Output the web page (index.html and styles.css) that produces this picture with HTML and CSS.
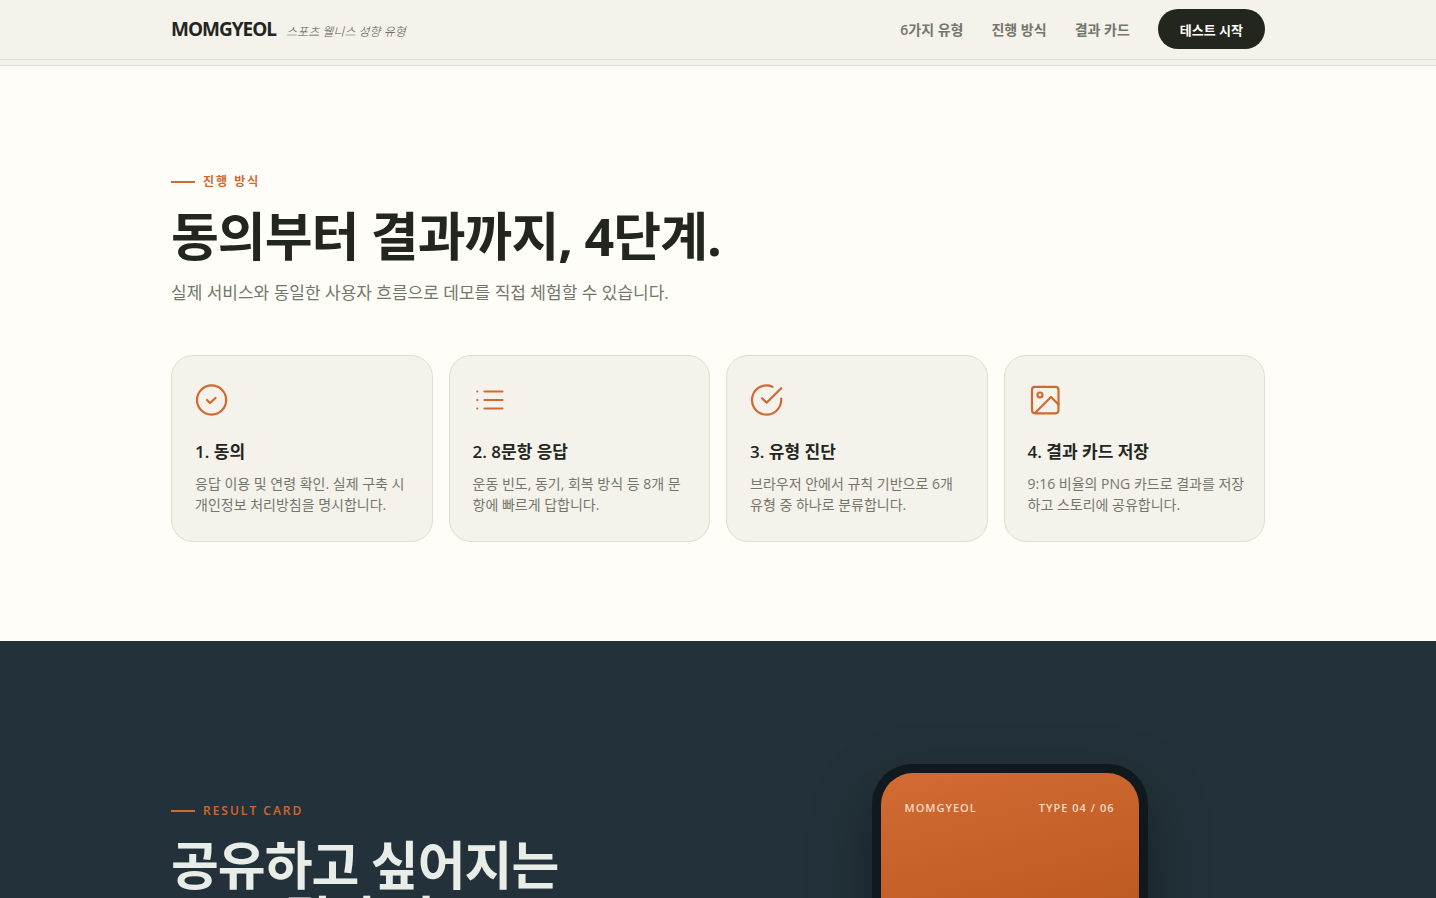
FILE: index.html
```
<!DOCTYPE html>
<html lang="ko">
<head>
    <meta charset="utf-8">
    <title>MOMGYEOL</title>
    <meta name="viewport" content="width=device-width, initial-scale=1.0">
    <link rel="stylesheet" href="styles.css">
</head>
<body>
    <header class="site-header">
        <div class="container header-inner">
            <a href="#" class="brand">MOMGYEOL <span class="brand-sub">스포츠 웰니스 성향 유형</span></a>
            <nav class="nav">
                <a href="#types">6가지 유형</a>
                <a href="#how">진행 방식</a>
                <a href="#result">결과 카드</a>
                <button type="button" class="btn-start">테스트 시작</button>
            </nav>
        </div>
    </header>
    <div class="progress"></div>

    <main>
        <section class="how" id="how">
            <div class="container">
                <p class="eyebrow">진행 방식</p>
                <h2 class="title">동의부터 결과까지, 4단계.</h2>
                <p class="lead">실제 서비스와 동일한 사용자 흐름으로 데모를 직접 체험할 수 있습니다.</p>

                <div class="steps">
                    <article class="step">
                        <svg class="icon" viewBox="1 1 34 34" aria-hidden="true">
                            <circle cx="17.6" cy="18" r="14.6"/>
                            <path d="M13 18l3 3 5.500-5"/>
                        </svg>
                        <h3>1. 동의</h3>
                        <p>응답 이용 및 연령 확인. 실제 구축 시 개인정보 처리방침을 명시합니다.</p>
                    </article>
                    <article class="step">
                        <svg class="icon" viewBox="1 1 34 34" aria-hidden="true">
                            <path d="M12.500 9.500h18M12.500 18h18M12.500 26.500h18M5.300 9.500h.02M5.300 18h.02M5.300 26.500h.02"/>
                        </svg>
                        <h3>2. 8문항 응답</h3>
                        <p>운동 빈도, 동기, 회복 방식 등 8개 문항에 빠르게 답합니다.</p>
                    </article>
                    <article class="step">
                        <svg class="icon" viewBox="1 1 34 34" aria-hidden="true">
                            <path d="M32.200 16.600V18a14.600 14.600 0 1 1-8.700-13.300"/>
                            <path d="M32.200 6.200L17.600 20.800l-4.600-4.600"/>
                        </svg>
                        <h3>3. 유형 진단</h3>
                        <p>브라우저 안에서 규칙 기반으로 6개 유형 중 하나로 분류합니다.</p>
                    </article>
                    <article class="step">
                        <svg class="icon" viewBox="1 1 34 34" aria-hidden="true">
                            <rect x="5" y="4.800" width="26.500" height="26.500" rx="3"/>
                            <circle cx="13" cy="13" r="2.500"/>
                            <path d="M31.500 22.500L24 15 8 31"/>
                        </svg>
                        <h3>4. 결과 카드 저장</h3>
                        <p>9:16 비율의 PNG 카드로 결과를 저장하고 스토리에 공유합니다.</p>
                    </article>
                </div>
            </div>
        </section>

        <section class="result" id="result">
            <div class="container result-inner">
                <div class="result-text">
                    <p class="eyebrow">RESULT CARD</p>
                    <h2 class="title">공유하고 싶어지는<br>9:16 결과 카드.</h2>
                </div>
                <div class="phone">
                    <div class="phone-screen">
                        <span>MOMGYEOL</span>
                        <span>TYPE 04 / 06</span>
                    </div>
                </div>
            </div>
        </section>
    </main>
</body>
</html>
```
FILE: styles.css
```
* {
    box-sizing: border-box;
    margin: 0;
    padding: 0;
}

:root {
    --ink: #23251f;
    --muted: #74766b;
    --paper: #fefdf8;
    --sand: #f5f2eb;
    --line: #deddd0;
    --accent: #d0692f;
    --navy: #23323a;
}

body {
    font-family: "Open Sans", "Noto Sans CJK KR", sans-serif;
    background: var(--paper);
    color: var(--ink);
}

a {
    color: inherit;
    text-decoration: none;
}

.container {
    max-width: 1180px;
    margin: 0 auto;
    padding: 0 43px;
}

/* header */
.site-header {
    background: var(--sand);
    border-bottom: 1px solid var(--line);
}

.header-inner {
    display: flex;
    justify-content: space-between;
    align-items: center;
    padding-top: 9px;
    padding-bottom: 10px;
}

.brand {
    font-size: 19px;
    font-weight: 700;
    letter-spacing: -1px;
    display: flex;
    align-items: baseline;
    gap: 10px;
}

.brand-sub {
    font-size: 12px;
    font-weight: 300;
    font-style: italic;
    letter-spacing: 0;
    color: #55574d;
}

.nav {
    display: flex;
    align-items: center;
    gap: 28px;
    font-size: 14px;
    font-weight: 600;
    color: var(--muted);
}

.btn-start {
    font-family: inherit;
    font-size: 13px;
    font-weight: 700;
    color: var(--paper);
    background: var(--ink);
    border: none;
    border-radius: 20px;
    height: 40px;
    padding: 0 22px;
    cursor: pointer;
}

.progress {
    height: 6px;
    background: var(--sand);
    border-bottom: 1px solid var(--line);
}

/* section headings */
.eyebrow {
    display: flex;
    align-items: center;
    gap: 8px;
    font-size: 12px;
    line-height: 18px;
    font-weight: 600;
    letter-spacing: 2px;
    color: var(--accent);
}

.eyebrow::before {
    content: "";
    width: 24px;
    height: 2px;
    background: var(--accent);
}

.title {
    font-size: 52px;
    line-height: 55px;
    font-weight: 700;
    letter-spacing: -1px;
    margin-top: 17px;
}

.lead {
    font-size: 17px;
    line-height: 28px;
    color: var(--muted);
    margin-top: 16px;
}

/* steps */
.how {
    padding: 107px 0 99px;
}

.steps {
    display: grid;
    grid-template-columns: repeat(4, 1fr);
    gap: 16px;
    margin-top: 48px;
}

.step {
    background: var(--sand);
    border: 1px solid var(--line);
    border-radius: 22px;
    padding: 27px 18px 26px 23px;
}

.icon {
    display: block;
    width: 34px;
    height: 34px;
    fill: none;
    stroke: var(--accent);
    stroke-width: 2.2;
    stroke-linecap: round;
    stroke-linejoin: round;
}

.step h3 {
    font-size: 17px;
    line-height: 28px;
    font-weight: 600;
    margin-top: 21px;
}

.step p {
    font-size: 14px;
    line-height: 21px;
    color: var(--muted);
    margin-top: 7px;
}

/* result card */
.result {
    background: var(--navy);
    padding: 123px 0;
}

.result-inner {
    display: grid;
    grid-template-columns: 1fr 1fr;
    gap: 72px;
}

.result-text {
    padding-top: 38px;
}

.result .title {
    color: #e9ede8;
}

.phone {
    justify-self: center;
    width: 276px;
    height: 507px;
    padding: 9px;
    background: #10191e;
    border-radius: 40px;
    box-shadow: 0 24px 60px rgba(0, 0, 0, 0.35);
}

.phone-screen {
    height: 100%;
    display: flex;
    justify-content: space-between;
    padding: 28px 24px;
    border-radius: 32px;
    background: linear-gradient(165deg, #d26b34 0%, #bd5a22 35%, #8c3f15 100%);
    color: #f8d9c4;
    font-size: 11px;
    line-height: 14px;
    font-weight: 600;
    letter-spacing: 1px;
}
```
